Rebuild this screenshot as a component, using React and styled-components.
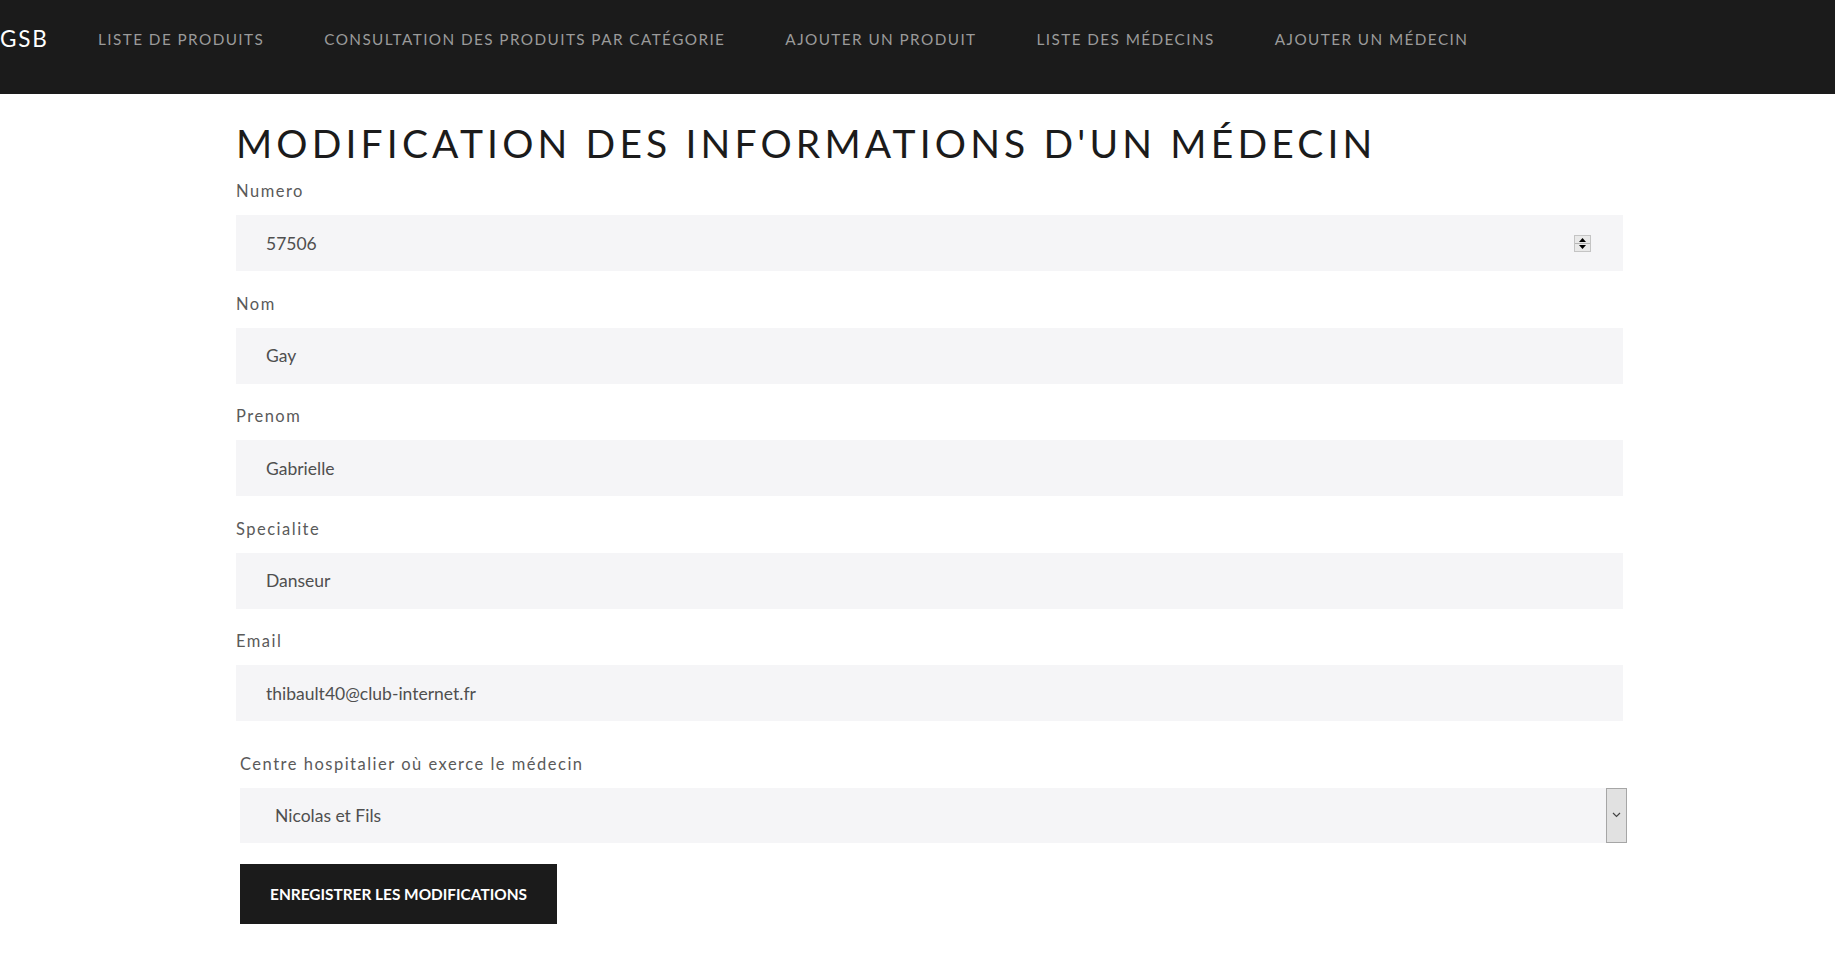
import styled, { createGlobalStyle } from "styled-components";

const GlobalStyle = createGlobalStyle`
  body {
    margin: 0;
    background: #fff;
    font-family: Lato, "Open Sans", sans-serif;
  }
`;

const Navbar = styled.nav`
  height: 77px;
  padding-bottom: 17px;
  display: flex;
  align-items: center;
  background: #1b1b1b;
`;

const Brand = styled.span`
  color: #fff;
  font-size: 22.5px;
  letter-spacing: 1.8px;
  margin-right: 19.5px;
`;

const NavLink = styled.a`
  padding: 0 30px;
  color: #9a9a9a;
  font-size: 15.3px;
  letter-spacing: 1.42px;
  text-transform: uppercase;
  text-decoration: none;
`;

const Main = styled.main`
  margin-left: 236px;
  width: 1387px;
  padding-bottom: 40px;
`;

const Title = styled.h1`
  margin: 25px 0 11px;
  font-size: 39px;
  line-height: 48px;
  font-weight: 400;
  letter-spacing: 4.15px;
  color: #1b1b1b;
  text-transform: uppercase;
`;

const Group = styled.div`
  margin: ${(p) => (p.$inset ? "0 -4px 19.6px 4px" : "0 0 19.6px")};
`;

const Label = styled.label`
  display: block;
  margin-bottom: 12px;
  padding-top: ${(p) => (p.$loose ? "11px" : "1px")};
  font-size: 16.5px;
  line-height: 24px;
  letter-spacing: 1.5px;
  color: #5a5a5a;
`;

const Field = styled.div`
  height: 56px;
  display: flex;
  align-items: center;
  padding: 0 32px 0 30px;
  background: #f5f5f7;
  box-sizing: border-box;
`;

const Input = styled.input`
  flex: 1;
  border: none;
  outline: none;
  background: transparent;
  padding: 0;
  font-family: Lato, "Open Sans", sans-serif;
  font-size: 17.5px;
  color: #4f4f4f;
`;

const Spinner = styled.span`
  width: 17px;
  height: 17px;
  box-sizing: border-box;
  border: 1px solid #c4c4c4;
  background: #e9e9e9;
  display: flex;
  flex-direction: column;
  align-items: center;
  justify-content: space-between;
  padding: 2px 0;

  & svg {
    display: block;
  }
`;

const SpinDivider = styled.span`
  width: 100%;
  height: 1px;
  background: #b5b5b5;
`;

const SelectBox = styled.div`
  height: 55px;
  display: flex;
  align-items: stretch;
  background: #f5f5f7;
`;

const SelectValue = styled.span`
  flex: 1;
  display: flex;
  align-items: center;
  padding-left: 35px;
  font-size: 17.5px;
  color: #4f4f4f;
`;

const ArrowBox = styled.span`
  width: 21px;
  box-sizing: border-box;
  border: 1px solid #a6a6a6;
  background: #e1e1e1;
  display: flex;
  align-items: center;
  justify-content: center;
`;

const SaveButton = styled.button`
  margin: 1px 0 0 4px;
  width: 317px;
  height: 60px;
  border: none;
  background: #1b1b1b;
  color: #fff;
  font-family: Lato, "Open Sans", sans-serif;
  font-size: 15.4px;
  font-weight: 700;
  text-transform: uppercase;
  cursor: pointer;
`;

const navItems = [
  "Liste de produits",
  "Consultation des produits par catégorie",
  "Ajouter un produit",
  "Liste des médecins",
  "Ajouter un médecin",
];

const fields = [
  { label: "Nom", value: "Gay" },
  { label: "Prenom", value: "Gabrielle" },
  { label: "Specialite", value: "Danseur" },
  { label: "Email", value: "thibault40@club-internet.fr" },
];

function App() {
  return (
    <>
      <GlobalStyle />
      <Navbar>
        <Brand>GSB</Brand>
        {navItems.map((item) => (
          <NavLink key={item} href="#">
            {item}
          </NavLink>
        ))}
      </Navbar>
      <Main>
        <Title>Modification des informations d'un médecin</Title>
        <Group>
          <Label>Numero</Label>
          <Field>
            <Input type="text" defaultValue="57506" />
            <Spinner>
              <svg width="7" height="4" viewBox="0 0 7 4">
                <path d="M3.5 0 L7 4 L0 4 Z" fill="#000" />
              </svg>
              <SpinDivider />
              <svg width="7" height="4" viewBox="0 0 7 4">
                <path d="M0 0 L7 0 L3.5 4 Z" fill="#000" />
              </svg>
            </Spinner>
          </Field>
        </Group>
        {fields.map((f) => (
          <Group key={f.label}>
            <Label>{f.label}</Label>
            <Field>
              <Input type="text" defaultValue={f.value} />
            </Field>
          </Group>
        ))}
        <Group $inset>
          <Label $loose>Centre hospitalier où exerce le médecin</Label>
          <SelectBox>
            <SelectValue>Nicolas et Fils</SelectValue>
            <ArrowBox>
              <svg width="9" height="6" viewBox="0 0 9 6">
                <path d="M1 1 L4.5 4.5 L8 1" stroke="#444" strokeWidth="1.2" fill="none" />
              </svg>
            </ArrowBox>
          </SelectBox>
        </Group>
        <SaveButton>Enregistrer les modifications</SaveButton>
      </Main>
    </>
  );
}

export default App;
